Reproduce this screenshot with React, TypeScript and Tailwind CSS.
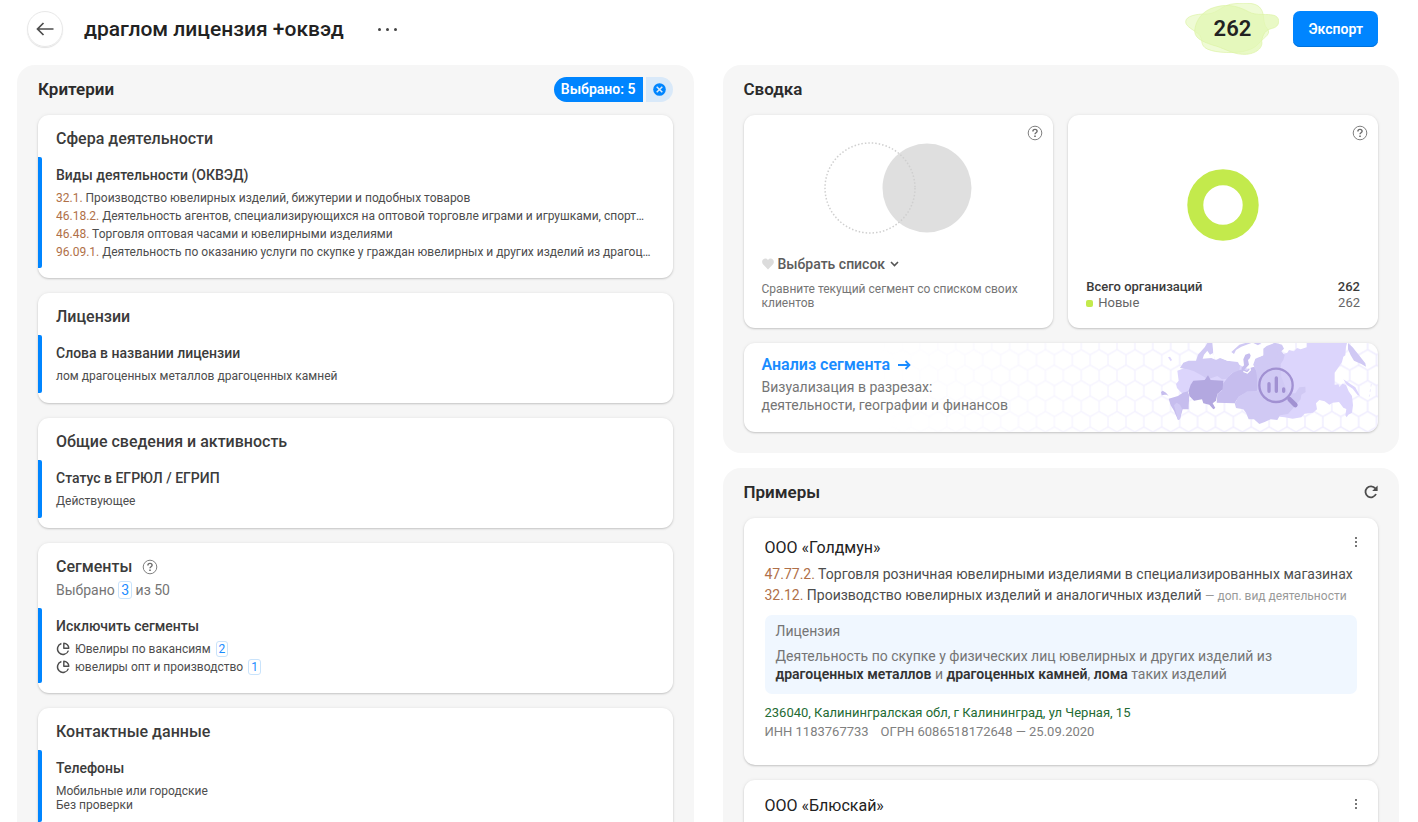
import type { ReactNode } from "react";

const CARD =
  "rounded-[11px] bg-white shadow-[0_1px_2px_rgba(0,0,0,0.18),0_0_4px_rgba(0,0,0,0.06)]";

function HelpIcon() {
  return (
    <svg width="16" height="16" viewBox="0 0 16 16" fill="none" aria-hidden="true">
      <circle cx="8" cy="8" r="6.8" stroke="#808080" strokeWidth="1" />
      <path
        d="M5.9 6.5C5.9 5.2 6.8 4.4 8 4.4c1.2 0 2.1.8 2.1 1.9 0 1.5-2.1 1.5-2.1 3"
        stroke="#6b6b6b"
        strokeWidth="1.4"
      />
      <rect x="7.2" y="10.5" width="1.6" height="1.5" fill="#6b6b6b" />
    </svg>
  );
}

function HelpButton() {
  return (
    <button type="button" aria-label="Справка" className="block size-4">
      <HelpIcon />
    </button>
  );
}

function PieIcon() {
  return (
    <svg width="14" height="14" viewBox="0 0 14 14" fill="none" stroke="#4d4d4d" strokeWidth="1.4" aria-hidden="true">
      <path d="M5.4 1.5A5.6 5.6 0 1 0 12.4 8.6" />
      <path d="M7.8 1.2v5h5A5 5 0 0 0 7.8 1.2Z" strokeLinejoin="round" />
    </svg>
  );
}

function Count({ children }: { children: ReactNode }) {
  return (
    <span className="rounded-[3px] border border-[#c9e3fb] px-[2px] text-[#1a8cff]">{children}</span>
  );
}

function CriteriaCard({
  title,
  help,
  subtitle,
  heading,
  children,
}: {
  title: string;
  help?: boolean;
  subtitle?: ReactNode;
  heading: string;
  children: ReactNode;
}) {
  return (
    <section className={`${CARD} pb-[10px]`}>
      <div className="flex h-10 items-center gap-[10px] px-[18px] pt-2">
        <h3 className="text-[16px] font-medium leading-5 text-[#3b3b3b]">{title}</h3>
        {help && <HelpButton />}
      </div>
      {subtitle && <p className="h-[23px] px-[18px] text-[14px] leading-[14px] text-[#757575]">{subtitle}</p>}
      <div className="mt-[2px] flex">
        <span className="w-1 shrink-0 rounded-r-[2px] bg-[#0085ff]" />
        <div className="min-w-0 flex-1 pt-2 pr-[18px] pb-[7px] pl-[14px]">
          <h4 className="text-[14px] font-medium leading-5 text-[#3b3b3b]">{heading}</h4>
          <div className="mt-1 text-[12px] leading-[18px] text-[#4d4d4d]">{children}</div>
        </div>
      </div>
    </section>
  );
}

const ACTIVITIES = [
  ["32.1.", "Производство ювелирных изделий, бижутерии и подобных товаров"],
  ["46.18.2.", "Деятельность агентов, специализирующихся на оптовой торговле играми и игрушками, спорт…"],
  ["46.48.", "Торговля оптовая часами и ювелирными изделиями"],
  ["96.09.1.", "Деятельность по оказанию услуги по скупке у граждан ювелирных и других изделий из драгоц…"],
];

function SegmentMap() {
  return (
    <svg
      className="absolute inset-y-0 right-0 h-full"
      width="500"
      height="89"
      viewBox="0 0 1500 267"
      preserveAspectRatio="xMaxYMid slice"
      aria-hidden="true"
    >
      <defs>
        <pattern id="hex" width="53.7" height="92.8" patternUnits="userSpaceOnUse" x="905" y="190">
          <path
            d="M26.85 15.5 53.7 30.9V61.9L26.85 77.3 0 61.9V30.9ZM26.85 77.3V92.8M26.85 0V15.5"
            fill="none"
            stroke="#eeebff"
            strokeWidth="4"
          />
        </pattern>
        <linearGradient id="fade">
          <stop offset="0" stopColor="#fff" stopOpacity="0" />
          <stop offset="0.6" stopColor="#fff" stopOpacity="0.8" />
          <stop offset="1" stopColor="#fff" />
        </linearGradient>
        <mask id="fadeMask">
          <rect width="1500" height="267" fill="url(#fade)" />
        </mask>
      </defs>
      <rect width="1500" height="267" fill="url(#hex)" mask="url(#fadeMask)" />
      <g transform="translate(840 -9)">
        <path
          fill="#dcd5fc"
          d="M58 92 90 80 240 60 300 50 375 50 376 42 388 38 393 30 408 34 417 24 428 28 446 22V9H567L564 20 562 46 556 50 552 66 540 84 530 98V134L541 133 545 141 553 131 564 134 572 154 582 168 585 196 582 218 571 224 566 232 562 226 565 207 556 203 543 186 524 188 514 194 500 184 484 180 474 190 477 208 465 218 440 221 430 232 404 236 380 232 366 230 300 200 180 160 98 152 84 160 70 158 57 144 54 132 62 122Z"
        />
        <path
          fill="#d0c9f4"
          d="M66 84 76 68 92 62 114 62 120 44 140 22 148 9H163L166 38 156 44 148 32 138 44 134 56 160 54 174 60 186 54 208 62 238 66 246 76 244 94 222 98 206 116 192 118 178 108 150 118 130 106 108 94 90 88Z"
        />
        <path fill="#c6bdee" d="M196 130 210 112 224 98 246 90 256 86 266 92 278 82 290 78 296 96 300 140 296 154 268 156 242 170 230 190 176 188 178 162 192 152Z" />
        <path
          fill="#d0c9f4"
          d="M290 58 320 44 330 22 350 8 372 14 378 26 370 34 380 46 376 60 368 72 370 110 390 160 412 160 424 142 442 140 443 156 430 164 428 178 404 206 390 222 366 226 358 240 338 238 320 246 304 252 288 238 272 238 264 218 256 208 234 204 230 190 242 170 268 154 298 154 296 96 286 78Z"
        />
        <path fill="#b3a8e0" d="M92 152 98 134 106 122 140 120 150 106 158 120 196 122 194 148 178 162 174 182 164 190 172 204 166 208 154 194 136 190 132 178 108 182 94 168Z" />
        <path fill="#c6bdee" d="M32 176 60 168 74 158 90 154 94 168 92 196 92 208 74 208 66 236 60 240 48 212 38 196Z" />
        <path fill="#d0c9f4" d="M48 196 56 188 66 194 72 206 66 238 60 240Z" />
        <path fill="#c6bdee" d="M9 156 14 152 24 158 32 168 26 164 20 164 11 166Z" />
        <path fill="#dcd5fc" d="M30 52 36 50 42 60 38 64Z" />
        <path fill="#fff" d="M166 9H280L288 20 322 9H340L330 30 318 44 292 56 284 78 270 86 262 84 244 74 240 66 208 62 186 52 172 58 166 40Z" />
        <path fill="#d0c9f4" d="M220 36 244 14 262 9H280L250 20 234 30 228 42ZM286 9 300 16 310 9Z" />
        <path fill="#d0c9f4" d="M316 26 326 18 350 9 360 40 340 70 286 78 294 58 316 48Z" />
        <path fill="#c6bdee" d="M256 58 262 44 274 40 278 46 276 54 270 60 273 74 264 84 254 92 250 84 258 76Z" />
        <path fill="none" stroke="#fff" strokeWidth="4" d="M256 94 268 99 277 90 275 82 288 78" />
        <path fill="#d0c9f4" d="M570 9 584 22 600 42 622 70 624 80 610 72 588 62 578 46 570 28Z" />
        <path fill="#dcd5fc" d="M556 118 574 130 592 142 606 168 598 164 584 146 566 134Z" />
        <path fill="none" stroke="#e6e1fd" strokeWidth="2" strokeDasharray="8 8" d="M640 132 634 170" />
        <g stroke="#a191d2" fill="none" strokeLinecap="round">
          <circle cx="354" cy="136" r="50" strokeWidth="7" fill="#d0c9f4" fillOpacity="0.6" />
          <path strokeWidth="14" d="M395 178 412 195" />
          <path strokeWidth="10" d="M333 131V154M355 114V154M377 147V154" />
        </g>
      </g>
    </svg>
  );
}

function KebabButton() {
  return (
    <button
      type="button"
      aria-label="Действия"
      className="-mr-[5px] mt-[3px] flex h-[14px] w-3 flex-col items-center justify-center gap-[2px]"
    >
      <span className="size-[2px] bg-[#777]" />
      <span className="size-[2px] bg-[#777]" />
      <span className="size-[2px] bg-[#777]" />
    </button>
  );
}

export default function App() {
  return (
    <div className="flex h-screen flex-col overflow-hidden bg-white font-['Roboto','Noto_Sans',sans-serif] text-[#222]">
      <header className="flex h-[65px] shrink-0 items-center pr-10 pb-[7px] pl-[27px]">
        <button
          type="button"
          aria-label="Назад"
          className="flex size-9 items-center justify-center rounded-full border border-[#e8e8e8] shadow-[0_1px_1px_rgba(0,0,0,0.12)]"
        >
          <svg width="18" height="14" viewBox="0 0 18 14" fill="none" stroke="#4d4d4d" strokeWidth="1.7" aria-hidden="true">
            <path d="M17.5 7H1.5M7.5 1 1.5 7l6 6" />
          </svg>
        </button>
        <h1 className="ml-[21px] text-[21px] font-medium leading-7">драглом лицензия +оквэд</h1>
        <button type="button" aria-label="Ещё" className="ml-[34px] flex items-center gap-[5px]">
          <span className="size-[3px] rounded-full bg-[#444]" />
          <span className="size-[3px] rounded-full bg-[#444]" />
          <span className="size-[3px] rounded-full bg-[#444]" />
        </button>
        <div className="relative ml-auto flex h-[52px] w-[94px] items-center justify-center">
          <svg className="absolute inset-0" width="94" height="52" viewBox="0 0 282 156" aria-hidden="true">
            <g stroke="#dcf3a4" strokeWidth="2">
              <path
                fill="#e2f7b3"
                fillOpacity="0.55"
                d="M2 56C2 40 32 32 66 33C100 32 110 4 150 2C184-1 216-2 228 18C240 34 232 62 246 76C260 92 240 102 226 116C214 130 206 138 172 146C132 152 78 148 60 134C46 122 54 112 44 96C30 82 2 72 2 56Z"
              />
              <path
                fill="#e2f7b3"
                fillOpacity="0.75"
                d="M30 76C34 54 50 22 92 12C134 0 168 14 190 26C214 40 248 30 270 38C288 46 284 72 262 76C242 80 234 92 230 114C236 138 206 156 172 154C138 152 116 134 82 126C48 114 24 104 30 76Z"
              />
            </g>
          </svg>
          <span className="relative text-[22px] font-semibold leading-7">262</span>
        </div>
        <button
          type="button"
          className="ml-[14px] h-9 rounded-[7px] bg-[#0085ff] px-[15px] text-[14px] font-semibold text-white shadow-[inset_0_-1px_0_#0072db]"
        >
          Экспорт
        </button>
      </header>

      <main className="grid min-h-0 flex-1 grid-cols-2 gap-[29px] pr-[19px] pl-[17px]">
        <section className="rounded-t-[18px] bg-[#f6f6f6] px-[21px]">
          <div className="flex h-[50px] items-center justify-between pb-[2px]">
            <h2 className="text-[17px] font-semibold leading-6 text-[#2b2b2b]">Критерии</h2>
            <div className="flex h-[25px] gap-[3px]">
              <button type="button" className="rounded-l-full bg-[#0085ff] px-[7px] text-[14px] font-semibold text-white">
                Выбрано: 5
              </button>
              <button
                type="button"
                aria-label="Сбросить"
                className="flex w-[27px] items-center justify-center rounded-r-full bg-[#d9e9f9]"
              >
                <svg width="13" height="13" viewBox="0 0 13 13" aria-hidden="true">
                  <circle cx="6.5" cy="6.5" r="6.3" fill="#0085ff" />
                  <path d="m3.7 3.7 5.6 5.6m0-5.6L3.7 9.3" stroke="#d9e9f9" strokeWidth="1.5" />
                </svg>
              </button>
            </div>
          </div>
          <div className="flex flex-col gap-[15px]">
            <CriteriaCard title="Сфера деятельности" heading="Виды деятельности (ОКВЭД)">
              <ul>
                {ACTIVITIES.map(([code, name]) => (
                  <li key={code} className="truncate">
                    <span className="text-[#b07048]">{code}</span> {name}
                  </li>
                ))}
              </ul>
            </CriteriaCard>
            <CriteriaCard title="Лицензии" heading="Слова в названии лицензии">
              <p className="pt-[2px] pb-[3px] leading-[14px]">лом драгоценных металлов драгоценных камней</p>
            </CriteriaCard>
            <CriteriaCard title="Общие сведения и активность" heading="Статус в ЕГРЮЛ / ЕГРИП">
              <p className="pt-[2px] pb-[3px] leading-[14px]">Действующее</p>
            </CriteriaCard>
            <CriteriaCard
              title="Сегменты"
              help
              subtitle={
                <>
                  Выбрано <Count>3</Count> из 50
                </>
              }
              heading="Исключить сегменты"
            >
              <ul>
                <li className="flex items-center gap-[5px] leading-[18px]">
                  <PieIcon />
                  Ювелиры по вакансиям
                  <span className="leading-3">
                    <Count>2</Count>
                  </span>
                </li>
                <li className="flex items-center gap-[5px] leading-[18px]">
                  <PieIcon />
                  ювелиры опт и производство
                  <span className="leading-3">
                    <Count>1</Count>
                  </span>
                </li>
              </ul>
            </CriteriaCard>
            <CriteriaCard title="Контактные данные" heading="Телефоны">
              <p className="pt-[2px] pb-[3px] leading-[14px]">
                Мобильные или городские
                <br />
                Без проверки
              </p>
            </CriteriaCard>
          </div>
        </section>

        <div className="flex min-h-0 flex-col gap-[15px]">
          <section className="shrink-0 rounded-[18px] bg-[#f6f6f6] px-[21px] pb-[21px]">
            <h2 className="flex h-[50px] items-center pb-[2px] text-[17px] font-semibold leading-6 text-[#2b2b2b]">Сводка</h2>
            <div className="grid grid-cols-2 gap-[15px]">
              <div className={`${CARD} relative flex h-[213px] flex-col px-[18px]`}>
                <div className="absolute top-[10px] right-[10px]">
                  <HelpButton />
                </div>
                <svg className="mx-auto mt-[27px]" width="148" height="93" viewBox="0 0 148 93" aria-hidden="true">
                  <circle cx="103" cy="46" r="44.5" fill="#dfdfdf" />
                  <circle cx="46" cy="46" r="45" fill="none" stroke="#cfcfcf" strokeWidth="1.5" strokeDasharray="1.5 2" />
                </svg>
                <button type="button" className="mt-[19px] flex h-5 items-center text-[14px] font-medium text-[#5c5c5c]">
                  <svg className="mr-1" width="12" height="12" viewBox="0 0 12 12" aria-hidden="true">
                    <path d="M6 11.5 1.2 6.6C-1.2 3.8.8.5 3.4.5 4.6.5 5.5 1.2 6 2 6.5 1.2 7.4.5 8.6.5c2.6 0 4.6 3.3 2.2 6.1Z" fill="#dcdcdc" />
                  </svg>
                  Выбрать список
                  <svg className="ml-[5px]" width="9" height="6" viewBox="0 0 9 6" fill="none" aria-hidden="true">
                    <path d="m1 1 3.5 3.5L8 1" stroke="#555" strokeWidth="1.6" />
                  </svg>
                </button>
                <p className="mt-2 text-[12px] leading-[14px] text-[#757575]">
                  Сравните текущий сегмент со списком своих клиентов
                </p>
              </div>
              <div className={`${CARD} relative flex h-[213px] flex-col px-[18px]`}>
                <div className="absolute top-[10px] right-[10px]">
                  <HelpButton />
                </div>
                <svg className="mx-auto mt-[54px]" width="72" height="72" viewBox="0 0 72 72" aria-hidden="true">
                  <circle cx="36" cy="36" r="27.7" fill="none" stroke="#c3ea4c" strokeWidth="16" />
                </svg>
                <dl className="mt-[38px] text-[13px] leading-4 text-[#666]">
                  <div className="flex justify-between font-medium text-[#3b3b3b]">
                    <dt>Всего организаций</dt>
                    <dd>262</dd>
                  </div>
                  <div className="flex justify-between">
                    <dt className="flex items-center gap-[5px]">
                      <span className="size-[7px] rounded-[2px] bg-[#c3ea4c]" />
                      Новые
                    </dt>
                    <dd>262</dd>
                  </div>
                </dl>
              </div>
            </div>
            <div className={`${CARD} relative mt-[15px] h-[89px] overflow-hidden px-[18px] pt-3`}>
              <SegmentMap />
              <div className="relative">
                <a href="#analysis" className="flex w-fit items-center gap-2 text-[16px] font-semibold leading-5 text-[#1a8cff]">
                  Анализ сегмента
                  <svg width="13" height="10" viewBox="0 0 13 10" fill="none" stroke="#1a8cff" strokeWidth="1.8" aria-hidden="true">
                    <path d="M0 5h11.5M7.5 1l4 4-4 4" />
                  </svg>
                </a>
                <p className="mt-[3px] text-[14px] leading-[18px] text-[#757575]">
                  Визуализация в разрезах:
                  <br />
                  деятельности, географии и финансов
                </p>
              </div>
            </div>
          </section>

          <section className="min-h-0 flex-1 rounded-t-[18px] bg-[#f6f6f6] px-[21px]">
            <div className="flex h-[50px] items-center justify-between pb-[2px]">
              <h2 className="text-[17px] font-semibold leading-6 text-[#2b2b2b]">Примеры</h2>
              <button type="button" aria-label="Обновить" className="block size-[14px]">
                <svg width="14" height="14" viewBox="0 0 14 14" fill="none" stroke="#4d4d4d" strokeWidth="1.8" aria-hidden="true">
                  <path d="M11.3 3.4A5.5 5.5 0 1 0 12 9" />
                  <path d="M13.6.6V6H8.2Z" fill="#4d4d4d" stroke="none" />
                </svg>
              </button>
            </div>
            <div className="flex flex-col gap-[15px]">
              <article className={`${CARD} px-[21px] pt-[14px] pb-6`}>
                <div className="flex justify-between">
                  <h3 className="pt-1 text-[16px] leading-6 text-[#222]">ООО «Голдмун»</h3>
                  <KebabButton />
                </div>
                <div className="mt-1 text-[14px] leading-[21px] text-[#4d4d4d]">
                  <p>
                    <span className="text-[#b07048]">47.77.2.</span> Торговля розничная ювелирными изделиями в
                    специализированных магазинах
                  </p>
                  <p>
                    <span className="text-[#b07048]">32.12.</span> Производство ювелирных изделий и аналогичных изделий{" "}
                    <span className="text-[12px] text-[#999]">— доп. вид деятельности</span>
                  </p>
                </div>
                <div className="mt-2 rounded-[7px] bg-[#f0f7ff] px-[11px] pt-[7px] pb-[11px] text-[14px] leading-[18px] text-[#757575]">
                  <p>Лицензия</p>
                  <p className="mt-[7px]">
                    Деятельность по скупке у физических лиц ювелирных и других изделий из
                    <br />
                    <b className="font-semibold text-[#333]">драгоценных металлов</b> и{" "}
                    <b className="font-semibold text-[#333]">драгоценных камней</b>,{" "}
                    <b className="font-semibold text-[#333]">лома</b> таких изделий
                  </p>
                </div>
                <p className="mt-[9px] text-[13px] leading-[19px] text-[#236b33]">
                  236040, Калинингралская обл, г Калининград, ул Черная, 15
                </p>
                <p className="flex gap-3 text-[13px] leading-[19px] text-[#808080]">
                  <span>ИНН 1183767733</span>
                  <span>ОГРН 6086518172648 — 25.09.2020</span>
                </p>
              </article>
              <article className={`${CARD} px-[21px] pt-[14px] pb-6`}>
                <div className="flex justify-between">
                  <h3 className="text-[16px] leading-6 text-[#222]">ООО «Блюскай»</h3>
                  <KebabButton />
                </div>
              </article>
            </div>
          </section>
        </div>
      </main>
    </div>
  );
}
